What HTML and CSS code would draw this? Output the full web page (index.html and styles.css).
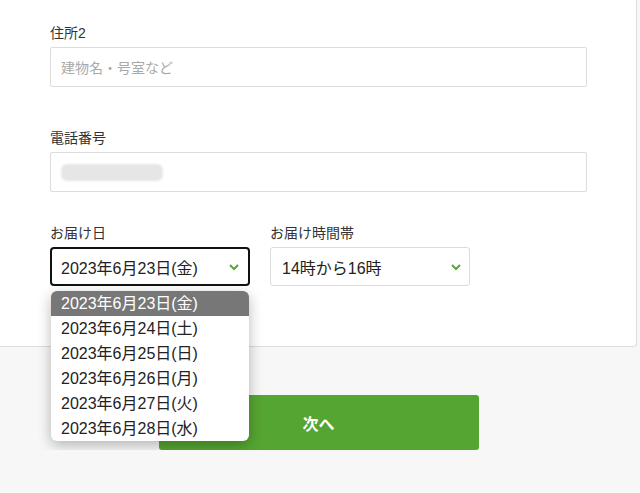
FILE: index.html
```html
<!DOCTYPE html>
<html lang="ja">
<head>
<meta charset="UTF-8">
<meta name="viewport" content="width=device-width, initial-scale=1.0">
<title>お届け先の入力</title>
<link rel="stylesheet" href="styles.css">
</head>
<body>

<div class="card">
<div class="field">
<label class="label">住所2</label>
<div class="input placeholder">建物名・号室など</div>
</div>

<div class="field field-tel">
<label class="label">電話番号</label>
<div class="input"><span class="masked"></span></div>
</div>

<div class="field-row">
<div class="field-col">
<label class="label">お届け日</label>
<div class="select select-open">
<span>2023年6月23日(金)</span>
<svg class="chevron" width="12" height="8" viewBox="0 0 12 8"><path d="M2 2l4 4 4-4" fill="none" stroke="#5aa536" stroke-width="2"/></svg>
<ul class="dropdown">
<li class="active">2023年6月23日(金)</li>
<li>2023年6月24日(土)</li>
<li>2023年6月25日(日)</li>
<li>2023年6月26日(月)</li>
<li>2023年6月27日(火)</li>
<li>2023年6月28日(水)</li>
</ul>
</div>
</div>
<div class="field-col">
<label class="label">お届け時間帯</label>
<div class="select">
<span>14時から16時</span>
<svg class="chevron" width="12" height="8" viewBox="0 0 12 8"><path d="M2 2l4 4 4-4" fill="none" stroke="#5aa536" stroke-width="2"/></svg>
</div>
</div>
</div>
</div>

<div class="actions">
<button class="button-next">次へ</button>
</div>

</body>
</html>
```

FILE: styles.css
```css
body {
margin: 0;
background-color: #f7f7f7;
font-family: "Liberation Sans", "Noto Sans CJK JP", sans-serif;
color: #333;
}

.card {
width: 637px;
box-sizing: border-box;
background-color: #ffffff;
border-right: 1px solid #dcdcdc;
border-bottom: 1px solid #dcdcdc;
border-bottom-right-radius: 4px;
padding: 23px 49px 60px 50px;
}

.field {
margin-bottom: 41px;
}

.field-tel {
margin-bottom: 31px;
}

.label {
display: block;
font-size: 14px;
line-height: 20px;
margin-bottom: 4px;
color: #333;
}

.input {
height: 40px;
box-sizing: border-box;
border: 1px solid #dcdcdc;
border-radius: 2px;
padding: 0 10px;
display: flex;
align-items: center;
font-size: 14px;
}

.placeholder {
color: #a9a9a9;
}

.masked {
display: block;
width: 102px;
height: 17px;
background-color: #e6e6e6;
border-radius: 6px;
filter: blur(1px);
}

.field-row {
display: flex;
gap: 20px;
}

.field-col {
width: 200px;
}

.select {
position: relative;
height: 39px;
box-sizing: border-box;
border: 1px solid #dcdcdc;
border-radius: 3px;
padding: 0 7px 0 11px;
display: flex;
align-items: center;
justify-content: space-between;
font-size: 16px;
color: #222;
}

.select-open {
border: 2px solid #111;
border-radius: 4px;
padding: 0 8px 0 9px;
}

.dropdown {
position: absolute;
top: 42px;
left: -1px;
width: 198px;
margin: 0;
padding: 0;
list-style: none;
background-color: #fff;
border-radius: 6px;
overflow: hidden;
box-shadow: 0 4px 14px rgba(0, 0, 0, 0.28);
z-index: 2;
}

.dropdown li {
height: 25px;
line-height: 25px;
padding-left: 10px;
font-size: 16px;
color: #222;
}

.dropdown li.active {
background-color: #777;
color: #fff;
}

.actions {
width: 637px;
display: flex;
justify-content: center;
padding-top: 48px;
}

.button-next {
width: 320px;
height: 55px;
border: none;
border-radius: 3px;
background-color: #55a532;
color: #fff;
font-family: inherit;
font-size: 16px;
font-weight: bold;
cursor: pointer;
}
```
